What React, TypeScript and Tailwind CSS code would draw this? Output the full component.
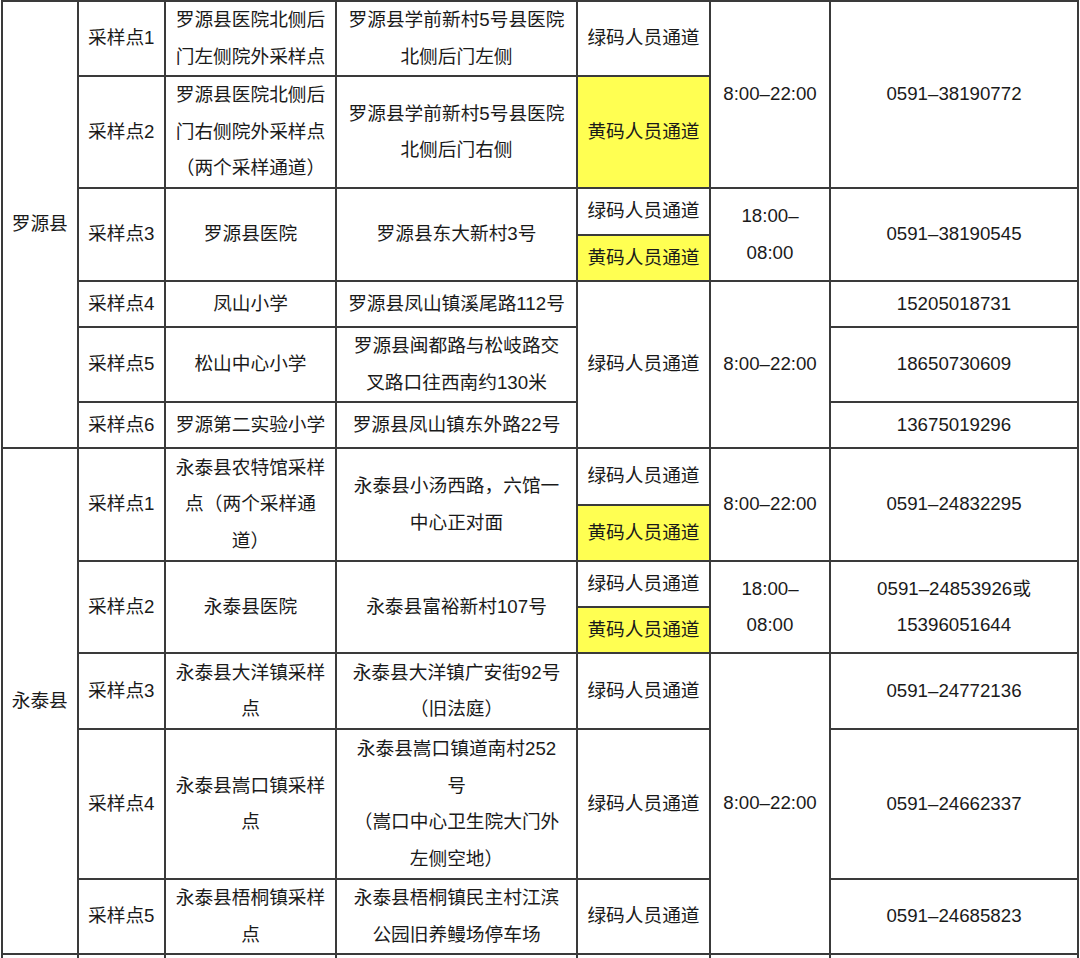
import React from "react";

type Cell = {
  text: string[];
  rs?: number;
  yellow?: boolean;
};

type Row = {
  h: string;
  cells: Cell[];
};

const G = "绿码人员通道";
const Y = "黄码人员通道";

const rows: Row[] = [
  {
    h: "h-[75px]",
    cells: [
      { text: ["罗源县"], rs: 7 },
      { text: ["采样点1"] },
      { text: ["罗源县医院北侧后", "门左侧院外采样点"] },
      { text: ["罗源县学前新村5号县医院", "北侧后门左侧"] },
      { text: [G] },
      { text: ["8:00–22:00"], rs: 2 },
      { text: ["0591–38190772"], rs: 2 },
    ],
  },
  {
    h: "h-[112px]",
    cells: [
      { text: ["采样点2"] },
      { text: ["罗源县医院北侧后", "门右侧院外采样点", "（两个采样通道）"] },
      { text: ["罗源县学前新村5号县医院", "北侧后门右侧"] },
      { text: [Y], yellow: true },
    ],
  },
  {
    h: "h-[47px]",
    cells: [
      { text: ["采样点3"], rs: 2 },
      { text: ["罗源县医院"], rs: 2 },
      { text: ["罗源县东大新村3号"], rs: 2 },
      { text: [G] },
      { text: ["18:00–", "08:00"], rs: 2 },
      { text: ["0591–38190545"], rs: 2 },
    ],
  },
  { h: "h-[46px]", cells: [{ text: [Y], yellow: true }] },
  {
    h: "h-[46px]",
    cells: [
      { text: ["采样点4"] },
      { text: ["凤山小学"] },
      { text: ["罗源县凤山镇溪尾路112号"] },
      { text: [G], rs: 3 },
      { text: ["8:00–22:00"], rs: 3 },
      { text: ["15205018731"] },
    ],
  },
  {
    h: "h-[75px]",
    cells: [
      { text: ["采样点5"] },
      { text: ["松山中心小学"] },
      { text: ["罗源县闽都路与松岐路交", "叉路口往西南约130米"] },
      { text: ["18650730609"] },
    ],
  },
  {
    h: "h-[46px]",
    cells: [
      { text: ["采样点6"] },
      { text: ["罗源第二实验小学"] },
      { text: ["罗源县凤山镇东外路22号"] },
      { text: ["13675019296"] },
    ],
  },
  {
    h: "h-[57px]",
    cells: [
      { text: ["永泰县"], rs: 7 },
      { text: ["采样点1"], rs: 2 },
      { text: ["永泰县农特馆采样", "点（两个采样通", "道）"], rs: 2 },
      { text: ["永泰县小汤西路，六馆一", "中心正对面"], rs: 2 },
      { text: [G] },
      { text: ["8:00–22:00"], rs: 2 },
      { text: ["0591–24832295"], rs: 2 },
    ],
  },
  { h: "h-[56px]", cells: [{ text: [Y], yellow: true }] },
  {
    h: "h-[46px]",
    cells: [
      { text: ["采样点2"], rs: 2 },
      { text: ["永泰县医院"], rs: 2 },
      { text: ["永泰县富裕新村107号"], rs: 2 },
      { text: [G] },
      { text: ["18:00–", "08:00"], rs: 2 },
      { text: ["0591–24853926或", "15396051644"], rs: 2 },
    ],
  },
  { h: "h-[46px]", cells: [{ text: [Y], yellow: true }] },
  {
    h: "h-[76px]",
    cells: [
      { text: ["采样点3"] },
      { text: ["永泰县大洋镇采样", "点"] },
      { text: ["永泰县大洋镇广安街92号", "（旧法庭）"] },
      { text: [G] },
      { text: ["8:00–22:00"], rs: 3 },
      { text: ["0591–24772136"] },
    ],
  },
  {
    h: "h-[150px]",
    cells: [
      { text: ["采样点4"] },
      { text: ["永泰县嵩口镇采样", "点"] },
      { text: ["永泰县嵩口镇道南村252", "号", "（嵩口中心卫生院大门外", "左侧空地）"] },
      { text: [G] },
      { text: ["0591–24662337"] },
    ],
  },
  {
    h: "h-[75px]",
    cells: [
      { text: ["采样点5"] },
      { text: ["永泰县梧桐镇采样", "点"] },
      { text: ["永泰县梧桐镇民主村江滨", "公园旧养鳗场停车场"] },
      { text: [G] },
      { text: ["0591–24685823"] },
    ],
  },
  {
    h: "h-[46px]",
    cells: [
      { text: [""] },
      { text: [""] },
      { text: [""] },
      { text: [""] },
      { text: [""] },
      { text: [""] },
      { text: [""] },
    ],
  },
];

const App: React.FC = () => {
  return (
    <div className="w-[1080px] h-[958px] overflow-hidden bg-white">
      <table
        className="ml-[1px] w-[1078px] table-fixed border-collapse text-[#1a1a1a] text-[18.7px] leading-[36.5px]"
        style={{ fontFamily: '"Liberation Sans", "Noto Sans CJK SC", sans-serif' }}
      >
        <colgroup>
          <col className="w-[75.5px]" />
          <col className="w-[87.5px]" />
          <col className="w-[171px]" />
          <col className="w-[241px]" />
          <col className="w-[133px]" />
          <col className="w-[120px]" />
          <col className="w-[248px]" />
        </colgroup>
        <tbody>
          {rows.map((row, i) => (
            <tr key={i} className={row.h}>
              {row.cells.map((cell, j) => (
                <td
                  key={j}
                  rowSpan={cell.rs}
                  className={`border-2 border-[#3a3a3a] p-0 text-center align-middle whitespace-nowrap ${
                    cell.yellow ? "bg-[#ffff52]" : "bg-white"
                  }`}
                >
                  {cell.text.map((line, k) => (
                    <div key={k}>{line}</div>
                  ))}
                </td>
              ))}
            </tr>
          ))}
        </tbody>
      </table>
    </div>
  );
};

export default App;
